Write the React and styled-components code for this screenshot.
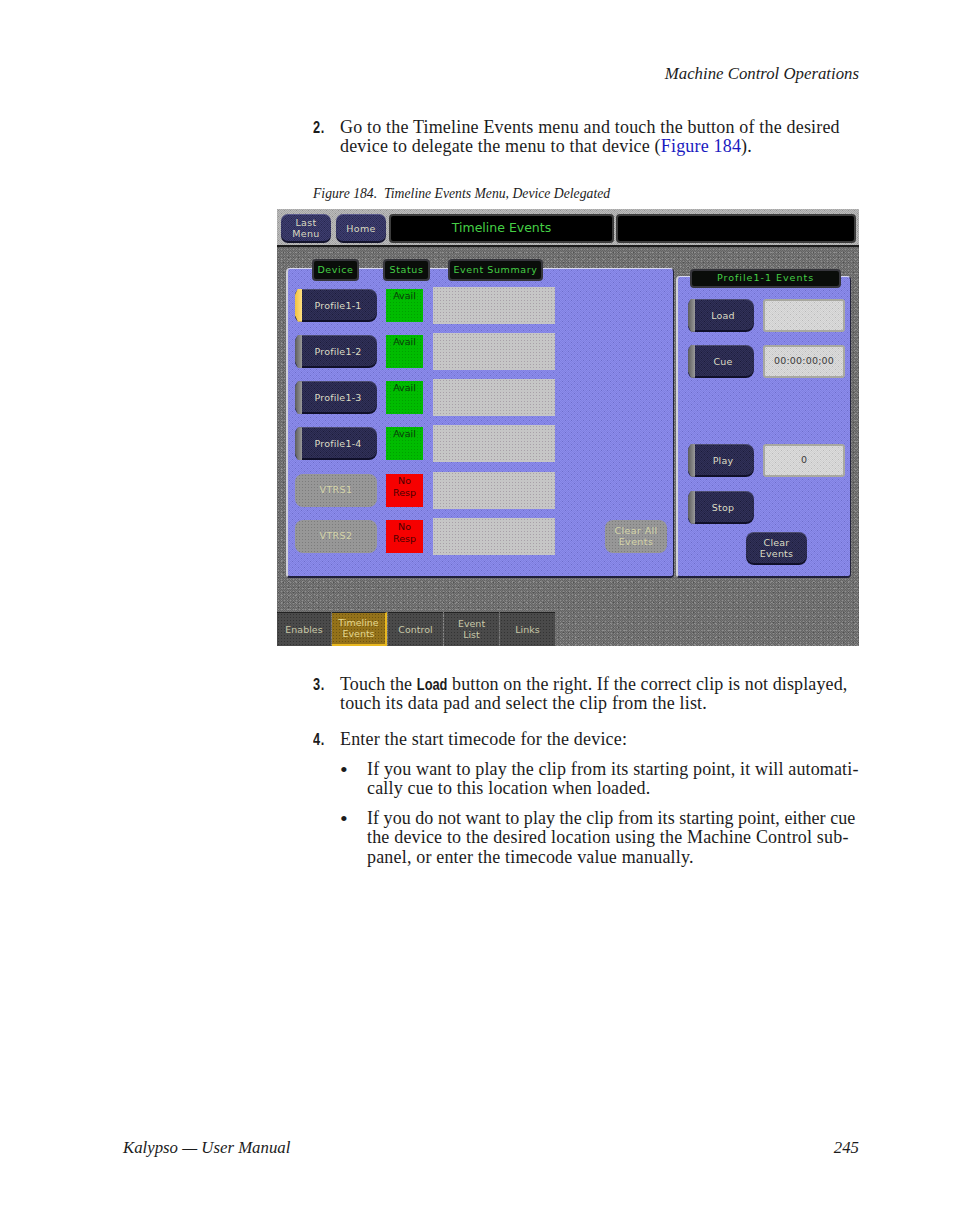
import React from "react";
import styled, { createGlobalStyle, css } from "styled-components";

const Global = createGlobalStyle`
  html, body { margin: 0; padding: 0; background: #fff; }
  body { font-family: "Liberation Serif", serif; color: #1c1c1c; }
`;

// the capture was dithered, so surfaces get a fine dot grid instead of a flat colour
const dots = (base, dot, size = 3) => css`
  background-color: ${base};
  background-image: radial-gradient(circle at 50% 50%, ${dot} 0.75px, transparent 0.95px);
  background-size: ${size}px ${size}px;
`;

const hatch = (base, a, b) => css`
  background-color: ${base};
  background-image: repeating-conic-gradient(${a} 0 25%, transparent 0 50%),
    radial-gradient(circle at 50% 50%, ${b} 0.6px, transparent 0.8px);
  background-size: 2px 2px, 3px 3px;
`;

const grain = css`
  background-color: #6c6c6c;
  background-image: radial-gradient(circle at 50% 50%, #8d8d8d 0.5px, transparent 0.8px),
    radial-gradient(circle at 30% 70%, #525252 0.6px, transparent 0.9px),
    radial-gradient(circle at 70% 20%, #929292 0.5px, transparent 0.8px),
    repeating-conic-gradient(#777777 0 25%, #646464 0 50%);
  background-size: 3px 3px, 5px 5px, 7px 7px, 2px 2px;
`;

const Page = styled.div`
  width: 954px;
  height: 1227px;
  padding: 64px 95px 0 0;
  box-sizing: border-box;
  display: flex;
  flex-direction: column;
  align-items: flex-end;
  position: relative;
  font-size: 18px;
  letter-spacing: 0.18px;
  line-height: 19.6px;
`;

const Header = styled.div`
  font-style: italic;
  font-size: 16.8px;
  letter-spacing: 0;
  text-align: right;
`;

const Column = styled.div`
  width: 546px;
`;

const Step = styled.div`
  display: flex;
  white-space: nowrap;
  margin-top: ${(p) => p.$top}px;
`;

const Num = styled.span`
  flex: 0 0 27px;
  font-family: "Liberation Sans", sans-serif;
  font-weight: 700;
  font-size: 16px;
  letter-spacing: 0.8px;
  transform: scaleX(0.8);
  transform-origin: left center;
`;

const Link = styled.span`
  color: #1a1ac0;
`;

const Kbd = styled.span`
  display: inline-block;
  margin: 0 -3.8px;
  font-family: "Liberation Sans", sans-serif;
  font-weight: 700;
  font-size: 16px;
  letter-spacing: 0;
  transform: scaleX(0.8);
`;

// Liberation Serif sets some lines wider than the original face did
const Line = styled.span`
  letter-spacing: ${(p) => p.$track}px;
`;

const Caption = styled.div`
  margin-top: 29px;
  font-style: italic;
  font-size: 13.7px;
  letter-spacing: 0;
  line-height: 15px;
`;

const Bullet = styled.div`
  display: flex;
  white-space: nowrap;
  margin: ${(p) => p.$top}px 0 0 27px;
`;

const Dot = styled.span`
  flex: 0 0 27px;
  font-size: 22px;
`;

const Footer = styled.div`
  position: absolute;
  left: 123px;
  right: 95px;
  top: 1138px;
  display: flex;
  justify-content: space-between;
  font-style: italic;
  font-size: 16.8px;
  letter-spacing: 0;
`;

/* the screenshot inside the page */
const Shot = styled.div`
  width: 582px;
  height: 437px;
  margin: 8px 0 0 -36px;
  display: flex;
  flex-direction: column;
  font-family: "DejaVu Sans", sans-serif;
  letter-spacing: 0;
  ${grain}
`;

const TopBar = styled.div`
  height: 38px;
  flex: none;
  box-sizing: border-box;
  padding: 5px 3px 2px 4px;
  display: flex;
  border-bottom: 2px solid #1c1c1c;
  ${hatch("#a6a6a6", "#bcbcbc", "#8f8f8f")}
`;

const NavButton = styled.div`
  width: 50px;
  margin-right: ${(p) => p.$gap}px;
  border-radius: 7px;
  display: flex;
  align-items: center;
  justify-content: center;
  text-align: center;
  font-size: 9.5px;
  line-height: 11.5px;
  letter-spacing: 0.3px;
  color: #d9d9c0;
  box-shadow: inset 0 1px 0 #5a5a8c, inset 0 -2px 0 #15152c;
  ${hatch("#2f2f5a", "#3e3e70", "#23234a")}
`;

const TitleBox = styled.div`
  flex: ${(p) => (p.$wide ? "1" : "0 0 221px")};
  margin-right: ${(p) => (p.$wide ? 0 : 2)}px;
  background: #000;
  border: 2px solid #3c3c3c;
  border-radius: 4px;
  display: flex;
  align-items: center;
  justify-content: center;
  color: #45cf45;
  font-size: 12.5px;
`;

const Body = styled.div`
  flex: 1;
  display: flex;
  align-items: flex-start;
  padding: 21px 0 0 9px;
`;

const panel = css`
  box-sizing: border-box;
  border-radius: 4px;
  border-top: 1px solid #d8d8f0;
  border-left: 2px solid #d0d0d8;
  border-right: 1px solid #20203a;
  border-bottom: 2px solid #20203a;
  ${hatch("#8080e0", "#8c8cec", "#6c6cc8")}
`;

const MainPanel = styled.div`
  ${panel}
  width: 388px;
  height: 310px;
  margin-right: 2px;
  padding: 0 0 0 7px;
`;

const SidePanel = styled.div`
  ${panel}
  width: 175px;
  height: 302px;
  margin-top: 8px;
  padding: 0 0 0 10px;
`;

const HeaderRow = styled.div`
  display: flex;
  margin: -10px 0 6px 17px;
`;

const HeadTag = styled.div`
  width: ${(p) => p.$w}px;
  height: 22px;
  margin-right: ${(p) => p.$gap || 0}px;
  box-sizing: border-box;
  background: #0a0d0a;
  border: 2px solid #36363c;
  border-radius: 4px;
  display: flex;
  align-items: center;
  justify-content: center;
  color: #45cf45;
  font-size: 9.5px;
  letter-spacing: 0.6px;
  white-space: nowrap;
`;

const SideHead = styled(HeadTag)`
  height: 19px;
  margin: -8px 0 0 2px;
  letter-spacing: 1px;
`;

const Rows = styled.div`
  display: flex;
  flex-direction: column;
  gap: 9.2px;
`;

const Row = styled.div`
  height: 37px;
  display: flex;
  align-items: center;
`;

const Device = styled.div`
  position: relative;
  width: ${(p) => p.$w || 82}px;
  height: 33px;
  flex: none;
  box-sizing: border-box;
  padding-left: ${(p) => (p.$plain ? 0 : 4)}px;
  border-radius: ${(p) => (p.$plain ? "8px" : "6px 8px 8px 6px")};
  display: flex;
  align-items: center;
  justify-content: center;
  text-align: center;
  font-size: 9.5px;
  line-height: 11.5px;
  letter-spacing: 0.2px;
  color: #dcdcc4;
  box-shadow: inset 0 1px 0 #4c4c70, inset 0 -2px 0 #10102a;
  ${hatch("#25254a", "#323258", "#1a1a38")}
`;

const Notch = styled.span`
  position: absolute;
  left: 0;
  top: 0;
  bottom: 0;
  width: 7px;
  background: ${(p) => (p.$on ? "linear-gradient(90deg, #f0c040, #ffe080)" : "linear-gradient(90deg, #5c5c5c, #9a9a9a)")};
  clip-path: polygon(100% 0, 100% 100%, 40% 100%, 0 80%, 0 18%, 40% 0);
`;

const Disabled = styled.div`
  width: ${(p) => p.$w || 82}px;
  height: 33px;
  margin-left: ${(p) => p.$left || 0}px;
  flex: none;
  border-radius: 8px;
  display: flex;
  align-items: center;
  justify-content: center;
  text-align: center;
  font-size: 9.5px;
  line-height: 11.5px;
  letter-spacing: 0.4px;
  color: #d4d4a8;
  ${dots("#979797", "#7c7c7c")}
`;

const Status = styled.div`
  width: 37px;
  height: 33px;
  margin: 0 10px 0 9px;
  flex: none;
  padding-top: 1px;
  box-sizing: border-box;
  text-align: center;
  font-size: 9.5px;
  line-height: 12px;
  color: ${(p) => (p.$ok ? "#0a3a0a" : "#4a0000")};
  ${(p) => (p.$ok ? dots("#00bc00", "#00a000") : css`background: #f60000;`)}
`;

const Summary = styled.div`
  width: 122px;
  height: 37px;
  flex: none;
  ${dots("#c6c6c6", "#a8a0a8")}
`;

const SideRow = styled.div`
  height: 33px;
  display: flex;
  margin-top: ${(p) => p.$top}px;
`;

const Field = styled.div`
  width: 82px;
  margin-left: 9px;
  box-sizing: border-box;
  border: 2px solid #a8a8a0;
  border-radius: 3px;
  display: flex;
  align-items: center;
  justify-content: center;
  font-size: 9.5px;
  letter-spacing: 0.2px;
  color: #3c3c3c;
  ${hatch("#cfcfcf", "#dcdcdc", "#b8b8b8")}
`;

const ClearRow = styled.div`
  margin: 8px 0 0 58px;
`;

const Tabs = styled.div`
  height: 34px;
  flex: none;
  display: flex;
  gap: 1px;
`;

const Tab = styled.div`
  width: ${(p) => p.$w || 55}px;
  box-sizing: border-box;
  display: flex;
  align-items: center;
  justify-content: center;
  text-align: center;
  font-size: 9.5px;
  line-height: 11.5px;
  color: #c8c8a8;
  border-top: 1px solid #222;
  ${(p) =>
    p.$on
      ? css`
          color: #e4d890;
          border-right: 2px solid #e8b820;
          border-bottom: 2px solid #e8b820;
          ${dots("#94721a", "#6e5410")}
        `
      : dots("#4a4a4a", "#333333")}
`;

const devices = [
  { name: "Profile1-1", on: true },
  { name: "Profile1-2" },
  { name: "Profile1-3" },
  { name: "Profile1-4" },
  { name: "VTRS1", off: true },
  { name: "VTRS2", off: true },
];

const tabs = [
  { label: <>Enables</>, w: 54 },
  { label: <>Timeline<br />Events</>, on: true },
  { label: <>Control</> },
  { label: <>Event<br />List</> },
  { label: <>Links</> },
];

function DeviceButton({ on, w, children }) {
  return (
    <Device $w={w}>
      <Notch $on={on} />
      {children}
    </Device>
  );
}

function TimelineEvents() {
  return (
    <Shot>
      <TopBar>
        <NavButton $gap={5}>Last<br />Menu</NavButton>
        <NavButton $gap={3}>Home</NavButton>
        <TitleBox>Timeline Events</TitleBox>
        <TitleBox $wide />
      </TopBar>
      <Body>
        <MainPanel>
          <HeaderRow>
            <HeadTag $w={47} $gap={24}>Device</HeadTag>
            <HeadTag $w={47} $gap={18}>Status</HeadTag>
            <HeadTag $w={95}>Event Summary</HeadTag>
          </HeaderRow>
          <Rows>
            {devices.map((d, i) => (
              <Row key={d.name}>
                {d.off ? <Disabled>{d.name}</Disabled> : <DeviceButton on={d.on}>{d.name}</DeviceButton>}
                {d.off ? <Status>No<br />Resp</Status> : <Status $ok>Avail</Status>}
                <Summary />
                {i === 5 && <Disabled $w={62} $left={50}>Clear All<br />Events</Disabled>}
              </Row>
            ))}
          </Rows>
        </MainPanel>
        <SidePanel>
          <SideHead $w={151}>Profile1-1 Events</SideHead>
          <SideRow $top={11}>
            <DeviceButton w={66}>Load</DeviceButton>
            <Field />
          </SideRow>
          <SideRow $top={13}>
            <DeviceButton w={66}>Cue</DeviceButton>
            <Field>00:00:00;00</Field>
          </SideRow>
          <SideRow $top={66}>
            <DeviceButton w={66}>Play</DeviceButton>
            <Field>0</Field>
          </SideRow>
          <SideRow $top={14}>
            <DeviceButton w={66}>Stop</DeviceButton>
          </SideRow>
          <ClearRow>
            <Device $plain $w={61}>Clear<br />Events</Device>
          </ClearRow>
        </SidePanel>
      </Body>
      <Tabs>
        {tabs.map((t, i) => (
          <Tab key={i} $w={t.w} $on={t.on}>{t.label}</Tab>
        ))}
      </Tabs>
    </Shot>
  );
}

export default function App() {
  return (
    <Page>
      <Global />
      <Header>Machine Control Operations</Header>
      <Column>
        <Step $top={34}>
          <Num>2.</Num>
          <div>
            Go to the Timeline Events menu and touch the button of the desired<br />
            device to delegate the menu to that device (<Link>Figure 184</Link>).
          </div>
        </Step>
        <Caption>Figure 184.&nbsp; Timeline Events Menu, Device Delegated</Caption>
        <TimelineEvents />
        <Step $top={29}>
          <Num>3.</Num>
          <div>
            <Line $track={0.11}>Touch the <Kbd>Load</Kbd> button on the right. If the correct clip is not displayed,</Line><br />
            touch its data pad and select the clip from the list.
          </div>
        </Step>
        <Step $top={16}>
          <Num>4.</Num>
          <div>Enter the start timecode for the device:</div>
        </Step>
        <Bullet $top={10}>
          <Dot>•</Dot>
          <div>
            <Line $track={0.15}>If you want to play the clip from its starting point, it will automati-</Line><br />
            cally cue to this location when loaded.
          </div>
        </Bullet>
        <Bullet $top={10}>
          <Dot>•</Dot>
          <div>
            <Line $track={0.04}>If you do not want to play the clip from its starting point, either cue</Line><br />
            the device to the desired location using the Machine Control sub-<br />
            panel, or enter the timecode value manually.
          </div>
        </Bullet>
      </Column>
      <Footer>
        <span>Kalypso — User Manual</span>
        <span>245</span>
      </Footer>
    </Page>
  );
}
